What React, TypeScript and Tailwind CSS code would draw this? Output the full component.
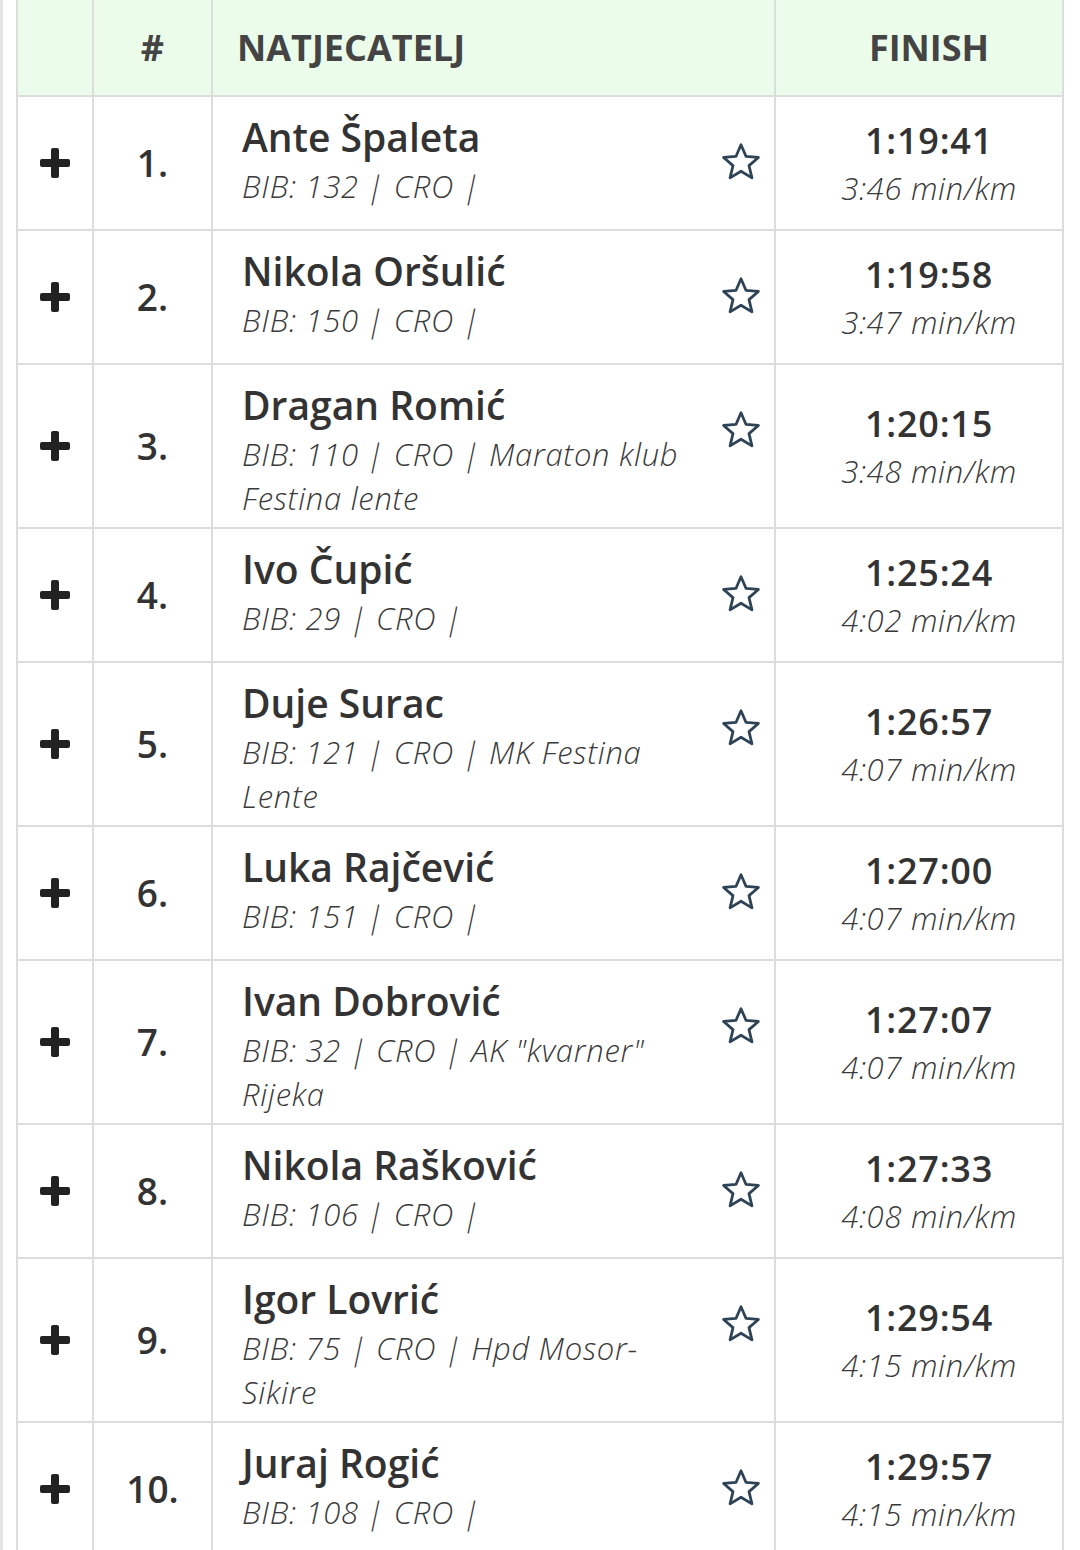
import React from "react";

type Result = {
  name: string;
  bib: number;
  club?: string;
  time: string;
  pace: string;
};

const results: Result[] = [
  { name: "Ante Špaleta", bib: 132, time: "1:19:41", pace: "3:46 min/km" },
  { name: "Nikola Oršulić", bib: 150, time: "1:19:58", pace: "3:47 min/km" },
  { name: "Dragan Romić", bib: 110, club: "Maraton klub Festina lente", time: "1:20:15", pace: "3:48 min/km" },
  { name: "Ivo Čupić", bib: 29, time: "1:25:24", pace: "4:02 min/km" },
  { name: "Duje Surac", bib: 121, club: "MK Festina Lente", time: "1:26:57", pace: "4:07 min/km" },
  { name: "Luka Rajčević", bib: 151, time: "1:27:00", pace: "4:07 min/km" },
  { name: "Ivan Dobrović", bib: 32, club: 'AK "kvarner" Rijeka', time: "1:27:07", pace: "4:07 min/km" },
  { name: "Nikola Rašković", bib: 106, time: "1:27:33", pace: "4:08 min/km" },
  { name: "Igor Lovrić", bib: 75, club: "Hpd Mosor-Sikire", time: "1:29:54", pace: "4:15 min/km" },
  { name: "Juraj Rogić", bib: 108, time: "1:29:57", pace: "4:15 min/km" },
];

const PlusIcon = () => (
  <svg width="30" height="30" viewBox="0 0 30 30" fill="#222">
    <rect x="0" y="11" width="30" height="8" rx="2" />
    <rect x="11" y="0" width="8" height="30" rx="2" />
  </svg>
);

const StarIcon = () => (
  <svg width="42" height="40" viewBox="0 0 24 23" fill="none">
    <polygon
      points="12,1.6 14.9,8.3 22,8.9 16.6,13.6 18.3,20.6 12,16.8 5.7,20.6 7.4,13.6 2,8.9 9.1,8.3"
      stroke="#2f4357"
      strokeWidth="1.6"
      strokeLinejoin="round"
    />
  </svg>
);

// italic pipe in open sans stays upright, the reference has it slanted
const Pipe = () => <span className="inline-block -skew-x-12 text-[#3a3a3a]">|</span>;

const cell = "border-r-2 border-b-2 border-[#dddddd]";

export default function App() {
  return (
    <div
      className="min-h-[1550px] bg-white border-l-[3px] border-[#e4e4e4] text-[#333]"
      style={{ fontFamily: '"Open Sans", "Noto Sans", sans-serif' }}
    >
      <div className="ml-[13px] w-[1048px] border-l-2 border-[#dddddd] grid grid-cols-[76px_119px_563px_288px]">
        {/* header */}
        <div className={`${cell} h-[97px] bg-[#ebfcea]`} />
        <div className={`${cell} h-[97px] bg-[#ebfcea] flex items-center justify-center text-[36px] font-bold text-[#444]`}>
          #
        </div>
        <div className={`${cell} h-[97px] bg-[#ebfcea] flex items-center pl-[24px] text-[36px] font-bold text-[#444]`}>
          NATJECATELJ
        </div>
        <div className={`${cell} h-[97px] bg-[#ebfcea] flex items-center justify-center pl-[20px] text-[36px] font-bold text-[#444]`}>
          FINISH
        </div>

        {results.map((r, i) => (
          <React.Fragment key={i}>
            <div className={`${cell} flex items-center justify-center`}>
              <PlusIcon />
            </div>
            <div className={`${cell} flex items-center justify-center text-[37px] font-semibold`}>
              {i + 1}.
            </div>
            <div className={`${cell} flex gap-[10px] pl-[29px] pr-[12px] pt-[13px] pb-[7px]`}>
              <div className="flex-1 min-w-0">
                <div className="text-[39px] leading-[54px] font-semibold text-[#333]">{r.name}</div>
                <div className="text-[31px] leading-[44px] italic font-light tracking-[0.7px] text-[#3a3a3a]">
                  BIB: {r.bib} <Pipe /> CRO <Pipe /> {r.club ?? ""}
                </div>
              </div>
              <div className="shrink-0 mt-[32px] h-[40px]">
                <StarIcon />
              </div>
            </div>
            <div className={`${cell} flex flex-col items-center justify-center pl-[20px] py-[19px]`}>
              <div className="text-[36px] leading-[50px] font-semibold tracking-[0.8px] text-[#333]">{r.time}</div>
              <div className="text-[31px] leading-[44px] italic font-light tracking-[0.7px] text-[#3a3a3a]">{r.pace}</div>
            </div>
          </React.Fragment>
        ))}
      </div>
    </div>
  );
}
